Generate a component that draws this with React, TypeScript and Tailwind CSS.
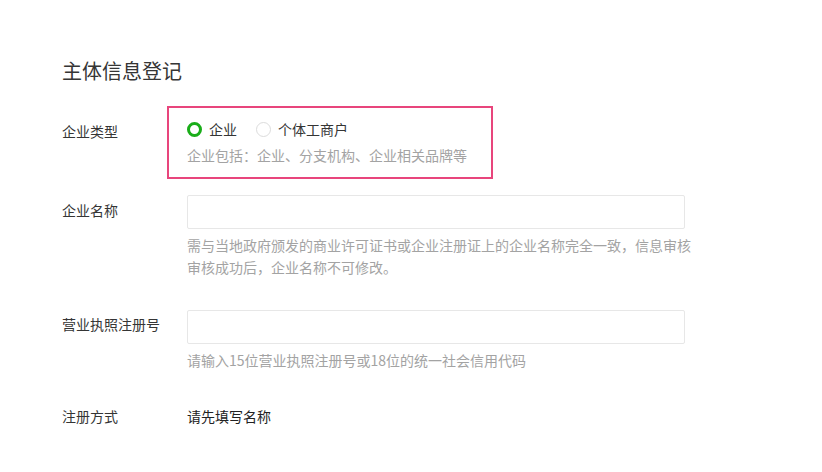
import React from "react";

const font = { fontFamily: '"Noto Sans CJK SC", "Noto Sans", sans-serif' };

export default function App() {
  return (
    <div
      className="min-h-[472px] w-[822px] bg-white pl-[62px] pt-[57px] text-[#353535]"
      style={font}
    >
      <h1 className="text-[20px] leading-[28px] font-normal">主体信息登记</h1>

      {/* Row 1 */}
      <div className="mt-[21px] flex items-start">
        <div className="w-[105px] pt-[15px] text-[14px] leading-[20px]">企业类型</div>
        <div className="w-[326px] border-2 border-[#e8457c] pl-[18px] pt-[11px] pb-[12px]">
          <div className="flex items-center text-[14px] leading-[20px]">
            <label className="flex items-center">
              <span className="box-border h-[15px] w-[15px] rounded-full border-[3px] border-[#1aad19] bg-white" />
              <span className="ml-[7px]">企业</span>
            </label>
            <label className="ml-[19px] flex items-center">
              <span className="box-border h-[15px] w-[15px] rounded-full border border-[#dcdcdc] bg-white" />
              <span className="ml-[7px]">个体工商户</span>
            </label>
          </div>
          <div className="mt-[6px] text-[14px] leading-[20px] text-[#a3a3a3]">
            企业包括：企业、分支机构、企业相关品牌等
          </div>
        </div>
      </div>

      {/* Row 2 */}
      <div className="mt-[16px] flex items-start">
        <div className="w-[125px] pt-[5px] text-[14px] leading-[20px]">企业名称</div>
        <div className="w-[498px]">
          <input className="box-border h-[34px] w-full rounded-[2px] border border-[#e7e7e7] bg-white px-2 text-[14px] outline-none" />
          <div className="mt-[5px] text-[14px] leading-[22px] text-[#a3a3a3] whitespace-nowrap">
            需与当地政府颁发的商业许可证书或企业注册证上的企业名称完全一致，信息审核
            <br />
            审核成功后，企业名称不可修改。
          </div>
        </div>
      </div>

      {/* Row 3 */}
      <div className="mt-[32px] flex items-start">
        <div className="w-[125px] pt-[4px] text-[14px] leading-[20px]">营业执照注册号</div>
        <div className="w-[498px]">
          <input className="box-border h-[34px] w-full rounded-[2px] border border-[#e7e7e7] bg-white px-2 text-[14px] outline-none" />
          <div className="mt-[5px] text-[14px] leading-[22px] text-[#a3a3a3]">
            请输入15位营业执照注册号或18位的统一社会信用代码
          </div>
        </div>
      </div>

      {/* Row 4 */}
      <div className="mt-[35px] flex items-start text-[14px] leading-[20px]">
        <div className="w-[125px]">注册方式</div>
        <div className="text-[#222]">请先填写名称</div>
      </div>
    </div>
  );
}
